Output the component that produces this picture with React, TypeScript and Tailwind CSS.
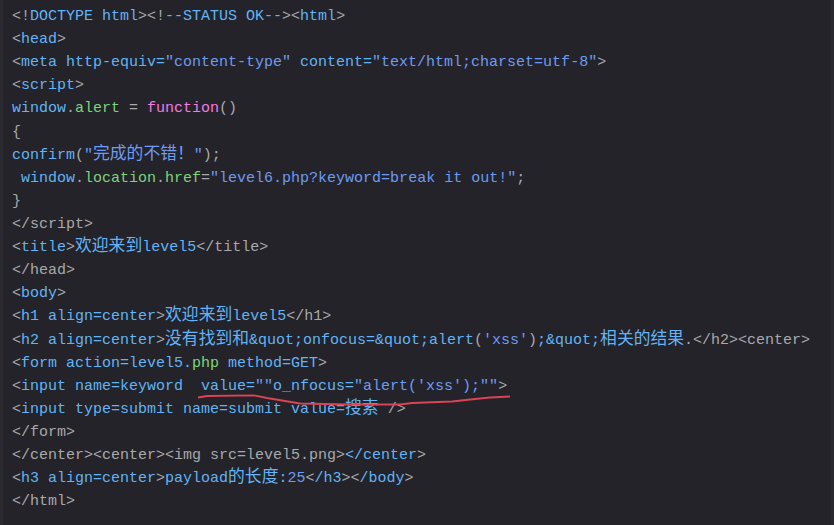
import React from 'react';

type Seg = [keyof typeof tone, string];

const tone = {
    g: 'text-[#a9a9ab]',
    b: 'text-[#62b4f6]',
    p: 'text-[#6f9bf2]',
    gr: 'text-[#7fd47a]',
    pk: 'text-[#f57ae3]',
};

const lines: Seg[][] = [
    [['g', '<!'], ['b', 'DOCTYPE html'], ['g', '><!'], ['b', '--STATUS OK--'], ['g', '><'], ['b', 'html'], ['g', '>']],
    [['g', '<'], ['b', 'head'], ['g', '>']],
    [['g', '<'], ['b', 'meta http-equiv='], ['p', '"content-type"'], ['b', ' content='], ['p', '"text/html;charset=utf-8"'], ['g', '>']],
    [['g', '<'], ['b', 'script'], ['g', '>']],
    [['b', 'window'], ['g', '.'], ['gr', 'alert'], ['g', ' = '], ['pk', 'function'], ['g', '()']],
    [['g', '{']],
    [['b', 'confirm'], ['g', '('], ['p', '"完成的不错！"'], ['g', ');']],
    [['b', ' window'], ['g', '.'], ['gr', 'location'], ['g', '.'], ['gr', 'href'], ['g', '='], ['p', '"level6.php?keyword=break it out!"'], ['g', ';']],
    [['g', '}']],
    [['g', '</script>']],
    [['g', '<'], ['b', 'title'], ['g', '>'], ['b', '欢迎来到level5'], ['g', '</title>']],
    [['g', '</head>']],
    [['g', '<'], ['b', 'body'], ['g', '>']],
    [['g', '<'], ['b', 'h1 align=center'], ['g', '>'], ['b', '欢迎来到level5'], ['g', '</h1>']],
    [['g', '<'], ['b', 'h2 align=center'], ['g', '>'], ['b', '没有找到和&quot;onfocus=&quot;alert'], ['g', '('], ['p', "'xss'"], ['g', ')'], ['b', ';&quot;相关的结果'], ['g', '.</h2><center>']],
    [['g', '<'], ['b', 'form action=level5.'], ['gr', 'php'], ['b', ' method=GET'], ['g', '>']],
    [['g', '<'], ['b', 'input name=keyword  value='], ['p', '""'], ['b', 'o_nfocus='], ['p', '"alert(\'xss\');""'], ['g', '>']],
    [['g', '<'], ['b', 'input type=submit name=submit value=搜索'], ['g', ' />']],
    [['g', '</form>']],
    [['g', '</center><center><img src=level5.png>'], ['b', '</center'], ['g', '>']],
    [['g', '<'], ['b', 'h3 align=center'], ['g', '>'], ['b', 'payload的长度:'], ['p', '25'], ['g', '<'], ['b', '/h3'], ['g', '><'], ['b', '/body'], ['g', '>']],
    [['g', '</html>']],
];

// split a run so CJK glyphs get their own (wider) font
const renderText = (text: string) =>
    text.split(/([\u3000-\u9fff\uff00-\uffef]+)/).map((part, i) =>
        i % 2 === 1 ? (
            <span key={i} className="font-['Noto_Sans_CJK_SC',sans-serif] text-[16.8px] leading-none">
                {part}
            </span>
        ) : (
            part
        )
    );

const App = () => {
    return (
        <div className="w-[834px] h-[525px] bg-[#232329] flex overflow-hidden">
            <div className="w-[3px] shrink-0 bg-[#2a2a30]" />
            <div className="relative flex-1 pl-[9px] pt-[5px] font-['Liberation_Mono',monospace] text-[15px]">
                {lines.map((line, i) => (
                    <div key={i} className="h-[23.12px] leading-[23.12px] whitespace-pre">
                        {line.map(([c, t], j) => (
                            <span key={j} className={tone[c]}>
                                {renderText(t)}
                            </span>
                        ))}
                    </div>
                ))}
                <svg className="absolute left-0 top-0 pointer-events-none" width="831" height="525">
                    <path
                        d="M195 397.5 L204 396 L251 395.3 L264 398 L282 401 L297 403.5 L347 404.5 L397 404.5 L409 403 L449 401.5 L472 399 L487 397.5 L507 396.5"
                        fill="none"
                        stroke="#d94456"
                        strokeWidth="1.8"
                        strokeLinejoin="round"
                    />
                </svg>
            </div>
            <div className="w-[3px] shrink-0 bg-[#29292f]" />
        </div>
    );
};

export default App;
